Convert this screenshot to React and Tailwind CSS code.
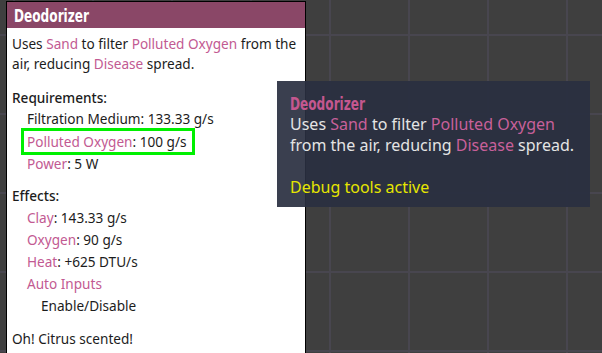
import React from "react";

const P = ({ children }) => <span className="text-[#c25a92]">{children}</span>;
const TP = ({ children }) => <span className="text-[#c8609a]">{children}</span>;

export default function App() {
  return (
    <div className="relative w-[602px] h-[353px] overflow-hidden bg-[#3f3f3f] bg-[linear-gradient(to_right,#48464f_2px,transparent_2px),linear-gradient(to_bottom,#48464f_2px,transparent_2px)] bg-[size:79px_79px] bg-[position:13px_34px] font-['Noto_Sans',sans-serif]">
      {/* Left panel */}
      <div className="ml-[6px] mt-[1px] w-[300px] h-[360px] border border-black bg-white flex flex-col">
        <div className="h-[26px] bg-[#8a4767] pl-[7px] pt-[1px] text-white text-[17.5px] leading-[26px] font-bold font-['DejaVu_Sans_Condensed','DejaVu_Sans',sans-serif]">
          <span className="inline-block origin-left scale-x-[0.77]">Deodorizer</span>
        </div>
        <div className="pl-[5px] pt-[6px] text-[13.6px] text-[#1c1c1c]">
          <div className="leading-[20px]">
            Uses <P>Sand</P> to filter <P>Polluted Oxygen</P> from the air, reducing <P>Disease</P> spread.
          </div>
          <div className="mt-[14px] leading-[20px] font-medium">Requirements:</div>
          <div className="pl-[15px] leading-[22px]">
            <div>Filtration Medium: 133.33 g/s</div>
            <div className="relative mt-[1px]">
              <P>Polluted Oxygen</P>: 100 g/s
              <span className="absolute left-[-6px] top-[-3px] w-[174px] h-[27px] border-[3px] border-[#00f000]" />
            </div>
            <div>
              <P>Power</P>: 5 W
            </div>
          </div>
          <div className="mt-[11px] leading-[20px] font-medium">Effects:</div>
          <div className="pl-[15px] leading-[22px] mt-[1px]">
            <div>
              <P>Clay</P>: 143.33 g/s
            </div>
            <div>
              <P>Oxygen</P>: 90 g/s
            </div>
            <div>
              <P>Heat</P>: +625 DTU/s
            </div>
            <div>
              <P>Auto Inputs</P>
            </div>
            <div className="pl-[14px]">Enable/Disable</div>
          </div>
          <div className="mt-[12px] leading-[20px]">Oh! Citrus scented!</div>
        </div>
      </div>

      {/* Hover tooltip */}
      <div className="absolute left-[277px] top-[81px] w-[313px] h-[126px] bg-[rgba(41,47,64,0.92)] pl-[13px] pt-[13px]">
        <div className="text-[17.5px] leading-[20px] font-bold text-[#c4578f] font-['DejaVu_Sans_Condensed','DejaVu_Sans',sans-serif]">
          <span className="inline-block origin-left scale-x-[0.77]">Deodorizer</span>
        </div>
        <div className="text-[16px] leading-[21px] text-[#e4e4e4]">
          <div>
            Uses <TP>Sand</TP> to filter <TP>Polluted Oxygen</TP>
          </div>
          <div>
            from the air, reducing <TP>Disease</TP> spread.
          </div>
          <div className="mt-[21px] text-[#e6e600]">Debug tools active</div>
        </div>
      </div>
    </div>
  );
}
